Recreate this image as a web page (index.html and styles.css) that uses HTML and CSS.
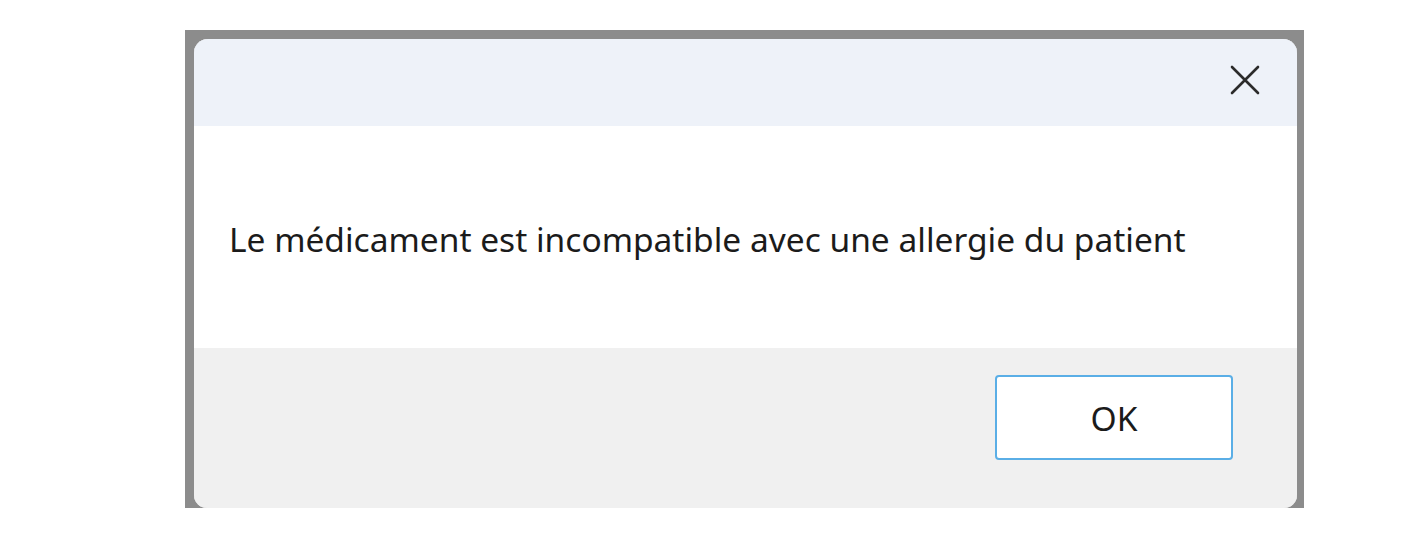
FILE: index.html
```html
<!DOCTYPE html>
<html lang="fr">
<head>
<meta charset="utf-8">
<title>Message</title>
<link rel="stylesheet" href="styles.css">
</head>
<body>
<div class="stage">
  <div class="frame">
    <div class="dialog">
      <div class="titlebar">
        <button class="close" aria-label="Fermer">
          <svg width="30" height="30" viewBox="0 0 30 30"><path d="M2 2 L28 28 M28 2 L2 28" stroke="#2b2b2b" stroke-width="2.6" stroke-linecap="round" fill="none"/></svg>
        </button>
      </div>
      <div class="content">
        <p class="message">Le médicament est incompatible avec une allergie du patient</p>
      </div>
      <div class="footer">
        <button class="ok">OK</button>
      </div>
    </div>
  </div>
</div>
</body>
</html>
```

FILE: styles.css
```css
html, body {
  margin: 0;
  padding: 0;
  background: #ffffff;
}
.stage {
  padding: 30px 0 0 185px;
}
.frame {
  width: 1119px;
  height: 478px;
  box-sizing: border-box;
  background: #8c8c8c;
  padding: 9px 7px 0 9px;
  display: flex;
}
.dialog {
  flex: 1;
  display: flex;
  flex-direction: column;
  border-radius: 14px 14px 13px 13px;
  overflow: hidden;
  background: #ffffff;
  box-shadow: inset 0 0 0 1px #c8c8c8;
  font-family: "Segoe UI", "Noto Sans", "Open Sans", sans-serif;
  color: #1b1b1b;
}
.titlebar {
  height: 87px;
  background: #eef2f9;
  display: flex;
  justify-content: flex-end;
  align-items: flex-start;
}
.close {
  margin: 26px 37px 0 0;
  padding: 0;
  border: 0;
  background: transparent;
  width: 30px;
  height: 30px;
  display: flex;
}
.content {
  height: 222px;
  box-sizing: border-box;
  padding: 93px 0 0 35px;
  background: #ffffff;
}
.message {
  margin: 0;
  font-size: 33.5px;
  line-height: 40px;
}
.footer {
  flex: 1;
  background: #f0f0f0;
  display: flex;
  justify-content: flex-end;
  align-items: flex-start;
  padding: 27px 64px 0 0;
}
.ok {
  width: 238px;
  height: 85px;
  box-sizing: border-box;
  background: #ffffff;
  border: 2px solid #5aaee6;
  border-radius: 4px;
  font-family: "Segoe UI", "Noto Sans", "Open Sans", sans-serif;
  font-size: 33.5px;
  color: #1b1b1b;
  padding: 0;
}
```
